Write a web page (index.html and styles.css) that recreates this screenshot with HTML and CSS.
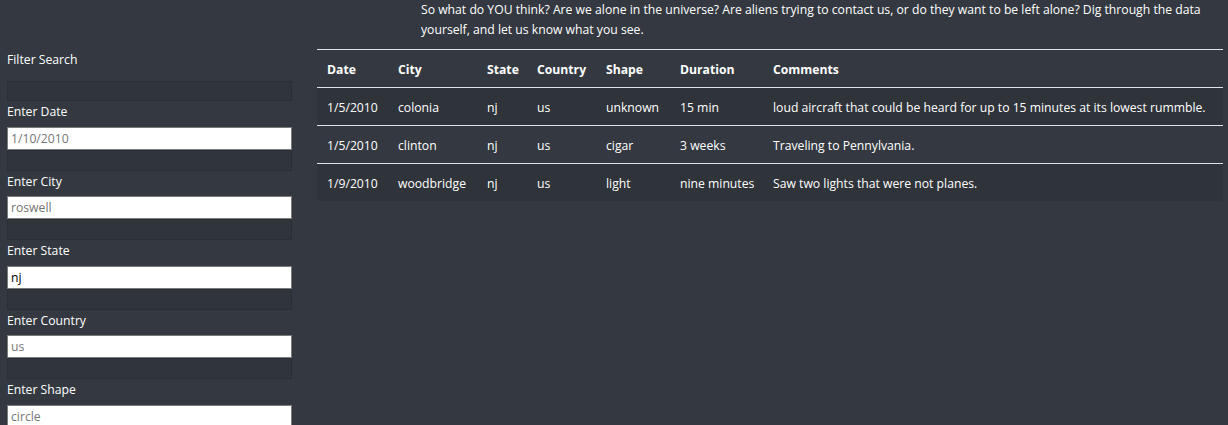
FILE: index.html
```html
<!DOCTYPE html>
<html>
<head>
<meta charset="utf-8">
<link rel="stylesheet" href="styles.css">
</head>
<body>
<div class="page">
  <aside class="filters">
    <div class="filter-title">Filter Search</div>
    <div class="slot slot-first"></div>
    <div class="item">
      <label class="label" for="date">Enter Date</label>
      <input class="field" id="date" type="text" placeholder="1/10/2010">
      <div class="slot"></div>
    </div>
    <div class="item">
      <label class="label" for="city">Enter City</label>
      <input class="field" id="city" type="text" placeholder="roswell">
      <div class="slot"></div>
    </div>
    <div class="item">
      <label class="label" for="state">Enter State</label>
      <input class="field" id="state" type="text" value="nj">
      <div class="slot"></div>
    </div>
    <div class="item">
      <label class="label" for="country">Enter Country</label>
      <input class="field" id="country" type="text" placeholder="us">
      <div class="slot"></div>
    </div>
    <div class="item">
      <label class="label" for="shape">Enter Shape</label>
      <input class="field" id="shape" type="text" placeholder="circle">
      <div class="slot"></div>
    </div>
  </aside>
  <main class="content">
    <p class="intro">So what do YOU think? Are we alone in the universe? Are aliens trying to contact us, or do they want to be left alone? Dig through the data yourself, and let us know what you see.</p>
    <table class="ufo">
      <colgroup>
        <col class="c-date"><col class="c-city"><col class="c-state"><col class="c-country"><col class="c-shape"><col class="c-duration"><col>
      </colgroup>
      <thead>
        <tr><th>Date</th><th>City</th><th>State</th><th>Country</th><th>Shape</th><th>Duration</th><th>Comments</th></tr>
      </thead>
      <tbody>
        <tr><td>1/5/2010</td><td>colonia</td><td>nj</td><td>us</td><td>unknown</td><td>15 min</td><td>loud aircraft that could be heard for up to 15 minutes at its lowest rummble.</td></tr>
        <tr><td>1/5/2010</td><td>clinton</td><td>nj</td><td>us</td><td>cigar</td><td>3 weeks</td><td>Traveling to Pennylvania.</td></tr>
        <tr><td>1/9/2010</td><td>woodbridge</td><td>nj</td><td>us</td><td>light</td><td>nine minutes</td><td>Saw two lights that were not planes.</td></tr>
      </tbody>
    </table>
  </main>
</div>
</body>
</html>
```
FILE: styles.css
```css
html, body {
  margin: 0;
  padding: 0;
  background: #343941;
}
body {
  color: #ffffff;
  font-family: "Open Sans", "Noto Sans", sans-serif;
  font-size: 12.2px;
  line-height: 20px;
  overflow: hidden;
  height: 425px;
}
.page {
  display: grid;
  grid-template-columns: 317px 906px;
  align-items: start;
  height: 425px;
  overflow: hidden;
}
.filters {
  padding: 50px 0 0 7px;
  width: 285px;
  display: flex;
  flex-direction: column;
}
.filter-title {
  line-height: 20px;
}
.slot {
  box-sizing: border-box;
  height: 21px;
  background: #30353c;
  border: 1px solid #2a2e35;
}
.slot-first {
  margin-top: 11px;
  height: 20px;
}
.item {
  display: flex;
  flex-direction: column;
}
.label {
  padding-top: 1px;
  line-height: 19.5px;
  margin-bottom: 5px;
}
.field {
  box-sizing: border-box;
  width: 285px;
  height: 23px;
  margin: 0;
  padding: 0 3px;
  border: 1px solid #7a7a7a;
  background: #ffffff;
  color: #000000;
  font-family: "Open Sans", "Noto Sans", sans-serif;
  font-size: 12.2px;
  outline: none;
}
.field::placeholder {
  color: #757575;
  opacity: 1;
}
.content {
  display: flex;
  flex-direction: column;
}
.intro {
  margin: 0 0 9px 104px;
  width: 800px;
  line-height: 20px;
}
.ufo {
  width: 906px;
  table-layout: fixed;
  border-collapse: collapse;
}
.c-date { width: 71px; }
.c-city { width: 89px; }
.c-state { width: 50px; }
.c-country { width: 69px; }
.c-shape { width: 74px; }
.c-duration { width: 93px; }
.ufo th, .ufo td {
  text-align: left;
  padding: 10px 10px 7px;
  line-height: 20px;
  border-top: 1px solid #dfe2e6;
  white-space: nowrap;
  vertical-align: middle;
}
.ufo th {
  font-weight: 700;
}
.ufo tbody tr:nth-child(odd) {
  background: #2f333a;
}
```
